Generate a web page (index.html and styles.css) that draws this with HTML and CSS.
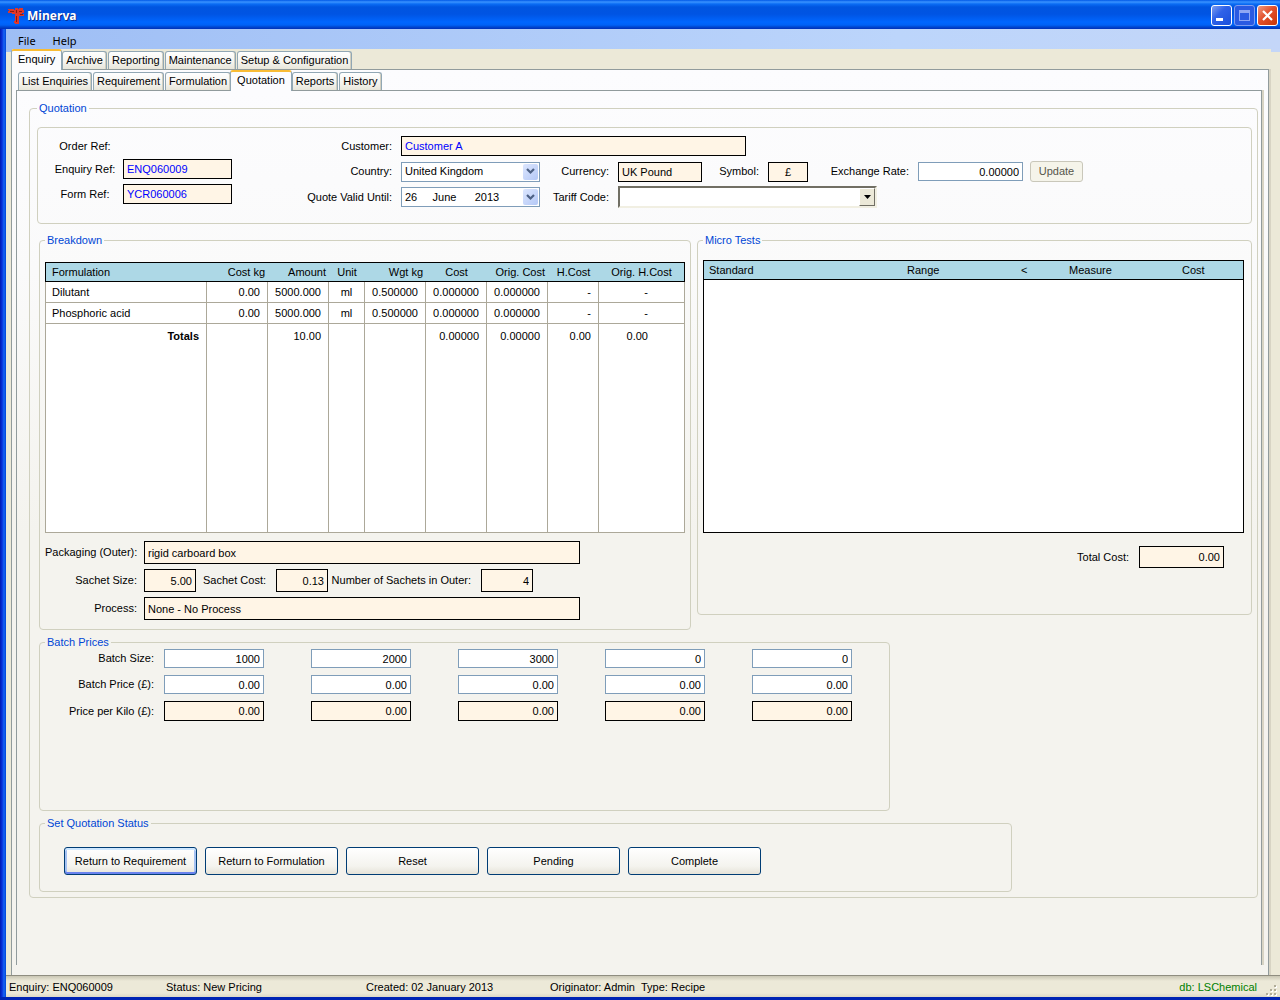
FILE: index.html
```html
<!DOCTYPE html>
<html lang="en">
<head>
<meta charset="utf-8">
<title>Minerva</title>
<link rel="stylesheet" href="styles.css">
</head>
<body>
<div class="window">
  <header class="titlebar">
    <svg class="logo" viewBox="0 0 16 16" width="16" height="16" aria-hidden="true">
      <path d="M0 1h6v1h1V0h3v1h1V0h4v2h1v3h-2v1h2v2h-5v8H7v-1H6v-2h1V6H4V5H0V3h1V2H0z" fill="#e0382a"/>
      <path d="M2 3.500h4M8.500 2v3M11 3.500h3M12 6.500h3M8.500 8v6" stroke="#8a1c10" fill="none"/>
    </svg>
    <h1 class="title">Minerva</h1>
    <button class="winbtn" type="button" aria-label="Minimize">
      <svg viewBox="0 0 19 19" width="19" height="19"><path d="M4 12h7v3H4z" fill="#fff"/></svg>
    </button>
    <button class="winbtn winbtn-off" type="button" aria-label="Maximize" disabled>
      <svg viewBox="0 0 19 19" width="19" height="19"><path d="M4 4h11v11H4zM5 7v7h9V7z" fill="#8ea6f4" fill-rule="evenodd"/></svg>
    </button>
    <button class="winbtn winbtn-close" type="button" aria-label="Close">
      <svg viewBox="0 0 19 19" width="19" height="19"><path d="M5 5l9 9M14 5l-9 9" stroke="#fff" stroke-width="2.2"/></svg>
    </button>
  </header>

  <div class="frame">
    <nav class="menubar">
      <button type="button" class="menu">File</button>
      <button type="button" class="menu">Help</button>
    </nav>

    <main class="workspace">
      <div class="tabs" role="tablist" aria-label="Sections">
        <button type="button" class="tab selected" role="tab" aria-selected="true">Enquiry</button>
        <button type="button" class="tab" role="tab">Archive</button>
        <button type="button" class="tab" role="tab">Reporting</button>
        <button type="button" class="tab" role="tab">Maintenance</button>
        <button type="button" class="tab" role="tab">Setup &amp; Configuration</button>
      </div>
      <div class="panel">
        <div class="tabs subtabs" role="tablist" aria-label="Enquiry pages">
          <button type="button" class="tab" role="tab">List Enquiries</button>
          <button type="button" class="tab" role="tab">Requirement</button>
          <button type="button" class="tab" role="tab">Formulation</button>
          <button type="button" class="tab selected" role="tab" aria-selected="true">Quotation</button>
          <button type="button" class="tab" role="tab">Reports</button>
          <button type="button" class="tab" role="tab">History</button>
        </div>
        <div class="panel subpanel">
          <form>
          <fieldset class="group quotation">
            <legend>Quotation</legend>

            <div class="group details">
              <div class="refs">
                <span>Order Ref:</span><span></span>
                <label for="enquiry-ref">Enquiry Ref:</label>
                <input id="enquiry-ref" class="field locked link" value="ENQ060009" readonly>
                <label for="form-ref">Form Ref:</label>
                <input id="form-ref" class="field locked link" value="YCR060006" readonly>
              </div>
              <div class="terms">
                <label for="customer">Customer:</label>
                <input id="customer" class="field locked link customer" value="Customer A" readonly>

                <label class="row-start" for="country">Country:</label>
                <div class="combo">
                  <select id="country" class="field"><option>United Kingdom</option></select>
                  <span class="arrow"><svg viewBox="0 0 9 7" width="9" height="7"><path d="M1 1l3.500 3.500L8 1" fill="none" stroke="#4d6185" stroke-width="2.200"/></svg></span>
                </div>
                <label for="currency">Currency:</label>
                <input id="currency" class="field locked" value="UK Pound" readonly>
                <label for="symbol">Symbol:</label>
                <input id="symbol" class="field locked center" value="£" readonly>
                <label for="rate">Exchange Rate:</label>
                <input id="rate" class="field num" value="0.00000">
                <button type="button" class="update" disabled>Update</button>

                <label class="row-start" for="valid">Quote Valid Until:</label>
                <div class="combo">
                  <input id="valid" class="field" value="26     June      2013">
                  <button type="button" class="arrow" aria-label="Open calendar"><svg viewBox="0 0 9 7" width="9" height="7"><path d="M1 1l3.500 3.500L8 1" fill="none" stroke="#4d6185" stroke-width="2.200"/></svg></button>
                </div>
                <label for="tariff">Tariff Code:</label>
                <div class="combo classic">
                  <select id="tariff" class="field"><option></option></select>
                  <span class="arrow"><svg viewBox="0 0 7 4" width="7" height="4"><path d="M0 0h7L3.500 4z"/></svg></span>
                </div>
              </div>
            </div>

            <div class="columns">
              <fieldset class="group breakdown">
                <legend>Breakdown</legend>
                <table class="grid costs">
                  <colgroup><col class="w-name"><col class="w-num"><col class="w-num"><col class="w-unit"><col class="w-num"><col class="w-num"><col class="w-num"><col class="w-h"><col></colgroup>
                  <thead>
                    <tr><th class="left">Formulation</th><th>Cost kg</th><th>Amount</th><th class="mid">Unit</th><th>Wgt kg</th><th class="mid">Cost</th><th>Orig. Cost</th><th class="mid">H.Cost</th><th class="mid">Orig. H.Cost</th></tr>
                  </thead>
                  <tbody>
                    <tr><td class="left">Dilutant</td><td>0.00</td><td>5000.000</td><td class="mid">ml</td><td>0.500000</td><td>0.000000</td><td>0.000000</td><td>-</td><td>-</td></tr>
                    <tr><td class="left">Phosphoric acid</td><td>0.00</td><td>5000.000</td><td class="mid">ml</td><td>0.500000</td><td>0.000000</td><td>0.000000</td><td>-</td><td>-</td></tr>
                  </tbody>
                  <tfoot>
                    <tr><th scope="row">Totals</th><td></td><td>10.00</td><td></td><td></td><td>0.00000</td><td>0.00000</td><td>0.00</td><td>0.00</td></tr>
                  </tfoot>
                </table>
                <div class="packaging">
                  <div class="line">
                    <label class="first" for="outer">Packaging (Outer):</label>
                    <input id="outer" class="field locked wide" value="rigid carboard box" readonly>
                  </div>
                  <div class="line">
                    <label class="first" for="sachet-size">Sachet Size:</label>
                    <input id="sachet-size" class="field locked num small" value="5.00" readonly>
                    <label class="second" for="sachet-cost">Sachet Cost:</label>
                    <input id="sachet-cost" class="field locked num small" value="0.13" readonly>
                    <label class="third" for="sachets">Number of Sachets in Outer:</label>
                    <input id="sachets" class="field locked num small" value="4" readonly>
                  </div>
                  <div class="line">
                    <label class="first" for="process">Process:</label>
                    <input id="process" class="field locked wide" value="None - No Process" readonly>
                  </div>
                </div>
              </fieldset>

              <fieldset class="group micro">
                <legend>Micro Tests</legend>
                <table class="grid tests">
                  <colgroup><col class="w-standard"><col class="w-range"><col class="w-less"><col class="w-measure"><col></colgroup>
                  <thead><tr><th>Standard</th><th>Range</th><th>&lt;</th><th>Measure</th><th>Cost</th></tr></thead>
                  <tbody><tr><td colspan="5"></td></tr></tbody>
                </table>
                <div class="total">
                  <label for="total-cost">Total Cost:</label>
                  <input id="total-cost" class="field locked num" value="0.00" readonly>
                </div>
              </fieldset>
            </div>

            <fieldset class="group batch">
              <legend>Batch Prices</legend>
              <div class="prices">
                <label for="size-1">Batch Size:</label>
                <input id="size-1" class="field num" value="1000">
                <input class="field num" value="2000" aria-label="Batch size 2">
                <input class="field num" value="3000" aria-label="Batch size 3">
                <input class="field num" value="0" aria-label="Batch size 4">
                <input class="field num" value="0" aria-label="Batch size 5">
                <label for="price-1">Batch Price (£):</label>
                <input id="price-1" class="field num" value="0.00">
                <input class="field num" value="0.00" aria-label="Batch price 2">
                <input class="field num" value="0.00" aria-label="Batch price 3">
                <input class="field num" value="0.00" aria-label="Batch price 4">
                <input class="field num" value="0.00" aria-label="Batch price 5">
                <label for="kilo-1">Price per Kilo (£):</label>
                <input id="kilo-1" class="field locked num" value="0.00" readonly>
                <input class="field locked num" value="0.00" aria-label="Price per kilo 2" readonly>
                <input class="field locked num" value="0.00" aria-label="Price per kilo 3" readonly>
                <input class="field locked num" value="0.00" aria-label="Price per kilo 4" readonly>
                <input class="field locked num" value="0.00" aria-label="Price per kilo 5" readonly>
              </div>
            </fieldset>

            <fieldset class="group status">
              <legend>Set Quotation Status</legend>
              <div class="actions">
                <button type="button" class="action default">Return to Requirement</button>
                <button type="button" class="action">Return to Formulation</button>
                <button type="button" class="action">Reset</button>
                <button type="button" class="action">Pending</button>
                <button type="button" class="action">Complete</button>
              </div>
            </fieldset>
          </fieldset>
          </form>
        </div>
      </div>
    </main>

    <footer class="statusbar">
      <span class="s-enquiry">Enquiry: ENQ060009</span>
      <span class="s-status">Status: New Pricing</span>
      <span class="s-created">Created: 02 January 2013</span>
      <span class="s-origin">Originator: Admin</span>
      <span>Type: Recipe</span>
      <span class="s-db">db: LSChemical</span>
      <svg class="grip" viewBox="0 0 12 12" width="12" height="12" aria-hidden="true">
        <path d="M9 1h2v2H9zM5 5h2v2H5zM9 5h2v2H9zM1 9h2v2H1zM5 9h2v2H5zM9 9h2v2H9z" fill="#fff"/>
        <path d="M8 0h2v2H8zM4 4h2v2H4zM8 4h2v2H8zM0 8h2v2H0zM4 8h2v2H4zM8 8h2v2H8z" fill="#b0ac98"/>
      </svg>
    </footer>
  </div>
</div>
</body>
</html>
```
FILE: styles.css
```css
* { box-sizing: border-box; }

body {
  margin: 0;
  font: 11px/13px "Liberation Sans", Arial, sans-serif;
  color: #000;
  background: #ece9d8;
}

button, input, select { font: inherit; color: inherit; margin: 0; }

.window {
  display: flex;
  flex-direction: column;
  min-height: 100vh;
  border-bottom: 3px solid #0024b4;
}

/* Title bar */
.titlebar {
  display: flex;
  align-items: center;
  gap: 2px;
  height: 29px;
  padding: 2px 2px 0 8px;
  background: linear-gradient(#0058e6 0, #3a93ff 2px, #0a6cf4 4px, #0055e0 7px, #0054e3 14px, #0066ff 22px, #0062f6 25px, #0047d0 27px, #0030b8 29px);
}
.title {
  flex: 1;
  margin: 0;
  padding-left: 1px;
  font: bold 12px/16px "Open Sans", "Noto Sans", sans-serif;
  color: #fff;
  text-shadow: 1px 1px #0a2a88;
}
.winbtn {
  width: 21px;
  height: 21px;
  padding: 0;
  border: 1px solid #fff;
  border-radius: 3px;
  background: linear-gradient(135deg, #7e9ef0, #2f62e8 40%, #1a4fdc);
}
.winbtn svg { display: block; }
.winbtn-off { border-color: #7f9cf0; background: #2a5ae2; }
.winbtn-close { border-color: #fff; background: linear-gradient(135deg, #f09a80, #e2502c 45%, #c83408); }

.frame {
  flex: 1;
  display: flex;
  flex-direction: column;
  padding-left: 6px;
  background: linear-gradient(90deg, #0019b0 0, #0831d9 2px, #1a66f4 4px, #0046d8 6px) 0 0 / 6px 100% no-repeat;
}

/* Menu */
.menubar {
  display: flex;
  height: 20px;
  padding: 4px 0 0 6px;
  background: linear-gradient(90deg, #9ebef5, #bcd5fb 70%, #c4d6f8);
}
.menu {
  padding: 1px 6px;
  margin-right: 5px;
  border: 0;
  background: none;
  line-height: 14px;
  font-family: "Noto Sans", sans-serif;
}

/* Tabs */
.workspace {
  flex: 1;
  display: flex;
  flex-direction: column;
  padding: 0 11px 0 5px;
  background:
    linear-gradient(#9ebef5, #9ebef5) 0 0 / 6px 3px no-repeat,
    linear-gradient(#c4d6f8, #c4d6f8) 100% 0 / 9px 3px no-repeat,
    #ece9d8;
}
.tabs { display: flex; align-items: flex-end; height: 20px; gap: 1px; }
.subtabs { padding-left: 2px; }
.tab {
  height: 18px;
  padding: 0 3px;
  border: 1px solid #91a7b4;
  border-bottom: 0;
  border-radius: 3px 3px 0 0;
  background: linear-gradient(#fff, #f4f3ee 60%, #e8e6da);
  box-shadow: inset -1px 0 #d2cfc0;
  line-height: 17px;
  white-space: nowrap;
}
.tab.selected {
  z-index: 1;
  height: 21px;
  padding: 0 6px 3px;
  margin: 0 -1px -1px 0;
  border-top: 2px solid #f9bc35;
  background: #fcfcfe;
  box-shadow: none;
  line-height: 16px;
}
.subtabs .selected { margin-left: -2px; }
.panel {
  flex: 1;
  display: flex;
  flex-direction: column;
  padding: 0 6px 10px 4px;
  border: 1px solid #919b9c;
  border-bottom: 0;
  background: linear-gradient(#fcfcfe 0, #fafafa 180px, #f4f3ee 440px);
  box-shadow: 2px 0 #d8d4c4;
}
.subpanel { display: block; padding: 11px 3px 0 12px; }

/* Group boxes */
.group {
  min-width: 0;
  margin: 0;
  border: 1px solid #d0d0bf;
  border-radius: 4px;
}
legend { padding: 0 2px; color: #0046d5; }
.quotation { padding: 12px 5px 5px 7px; }

.details { display: flex; padding: 7px 0 15px; margin-bottom: 10px; }
.refs {
  display: grid;
  grid-template-columns: 76px 109px;
  grid-template-rows: 22px 24px 26px;
  align-items: center;
  margin-left: 9px;
  text-align: center;
}
.terms {
  display: grid;
  grid-template-columns: 101px 139px 78px 84px 66px 40px 110px 105px 60px;
  grid-template-rows: 22px 29px 22px;
  align-items: center;
  margin-left: 68px;
}
.terms label { padding-right: 9px; text-align: right; white-space: nowrap; }
.terms .row-start { grid-column: 1; }

.field {
  width: 100%;
  height: 19px;
  padding: 0 3px;
  border: 1px solid #7f9db9;
  border-radius: 0;
  background: #fff;
  outline: 0;
}
.field.locked { height: 20px; border-color: #000; background: #fff5e6; }
.field.link { color: #0000ff; }
.field.num { text-align: right; }
.field.center { text-align: center; }

.terms .customer { grid-column: 2 / span 4; width: 345px; }

.combo { position: relative; }
.combo .field { display: block; height: 20px; appearance: none; }
.combo .arrow {
  position: absolute;
  top: 2px;
  right: 2px;
  bottom: 2px;
  display: flex;
  align-items: center;
  justify-content: center;
  width: 15px;
  padding: 0;
  border: 0;
  border-radius: 2px;
  background: linear-gradient(135deg, #dce6fe, #b4c8f6);
  pointer-events: none;
}
.classic { grid-column: 4 / span 4; width: 259px; }
.classic .field { height: 22px; border: 2px solid; border-color: #716f64 #f1efe2 #f1efe2 #716f64; }
.classic .arrow {
  width: 16px;
  border: 1px solid;
  border-color: #fff #716f64 #716f64 #fff;
  border-radius: 0;
  background: #ece9d8;
}
.update {
  height: 21px;
  margin-left: 7px;
  padding: 0;
  border: 1px solid #c9c7ba;
  border-radius: 3px;
  background: #f5f4ea;
  color: #55544c;
}

/* Breakdown and micro tests */
.columns { display: flex; align-items: flex-start; gap: 6px; margin: 0 0 6px 2px; }
.breakdown { flex: 0 0 652px; padding: 15px 5px 9px; }
.micro { flex: 1; padding: 13px 7px 46px 5px; }

.grid { width: 100%; border-spacing: 0; table-layout: fixed; background: #fff; }
.grid th, .grid td { padding: 0 7px 0 0; font-weight: normal; text-align: right; white-space: nowrap; }
.grid thead th {
  height: 20px;
  padding-right: 3px;
  border: solid #000;
  border-width: 1px 0;
  background: #add8e6;
}
.grid thead th:first-child { border-left-width: 1px; }
.grid thead th:last-child { border-right-width: 1px; }
.grid .left { padding-left: 6px; text-align: left; }
.grid thead .mid, .grid .mid { padding: 0; text-align: center; }

.costs tbody td, .costs tfoot th, .costs tfoot td {
  height: 21px;
  border: solid #aca899;
  border-width: 0 1px 1px 0;
}
.costs tbody td:first-child, .costs tfoot th { border-left-width: 1px; }
.costs tbody td:last-child, .costs tfoot td:last-child { padding-right: 36px; }
.costs tfoot th, .costs tfoot td { height: 209px; padding-top: 6px; vertical-align: top; }
.costs tfoot th { font-weight: bold; }
.w-name { width: 162px; }
.w-num { width: 61px; }
.w-unit { width: 36px; }
.w-h { width: 51px; }

.tests thead th { padding: 0 0 0 5px; text-align: left; }
.tests tbody td { height: 253px; border: 1px solid #000; border-top: 0; }
.w-standard { width: 199px; }
.w-range { width: 114px; }
.w-less { width: 48px; }
.w-measure { width: 113px; }

.packaging { display: grid; gap: 5px; margin-top: 8px; }
.line { display: flex; align-items: center; }
.line .field { height: 23px; }
.line label { flex: none; padding-right: 10px; text-align: right; white-space: nowrap; }
.line .first { width: 99px; padding-right: 7px; }
.second { width: 80px; }
.third { width: 153px; }
.line .small { width: 52px; }
.line .wide { width: 436px; }

.total { display: flex; align-items: center; justify-content: flex-end; gap: 10px; margin: 13px 20px 0 0; }
.total .field { width: 85px; height: 22px; }

/* Batch prices */
.batch { width: 851px; max-width: 100%; min-height: 175px; margin: 0 0 6px 2px; padding: 0 5px; }
.prices {
  display: grid;
  grid-template-columns: 72px repeat(5, 100px);
  gap: 7px 47px;
  align-items: center;
}
.prices label { margin: 0 -37px 0 0; text-align: right; white-space: nowrap; }

/* Status buttons */
.status { width: 973px; max-width: 100%; margin-left: 2px; padding: 17px 5px 16px; }
.actions { display: flex; gap: 8px; padding-left: 19px; }
.action {
  width: 133px;
  height: 28px;
  padding: 0;
  border: 1px solid #003c74;
  border-radius: 3px;
  background: linear-gradient(#fff, #f4f3ee 70%, #e6e3d8);
}
.action.default { box-shadow: inset 0 2px #cee7ff, inset 0 -2px #6982ee, inset 2px 0 #a6c2f2, inset -2px 0 #a6c2f2; }

/* Status bar */
.statusbar {
  display: flex;
  align-items: center;
  height: 22px;
  padding: 1px 2px 0 3px;
  border-top: 1px solid #8f8d80;
  background: linear-gradient(#c9c6b4, #ece9d8 5px, #ece9d8 17px, #dcd8c6);
  white-space: nowrap;
}
.s-enquiry { width: 157px; }
.s-status { width: 200px; }
.s-created { width: 184px; }
.s-origin { width: 91px; }
.s-db { margin-left: auto; color: #008000; }
.grip { align-self: flex-end; margin-left: 9px; }
```
